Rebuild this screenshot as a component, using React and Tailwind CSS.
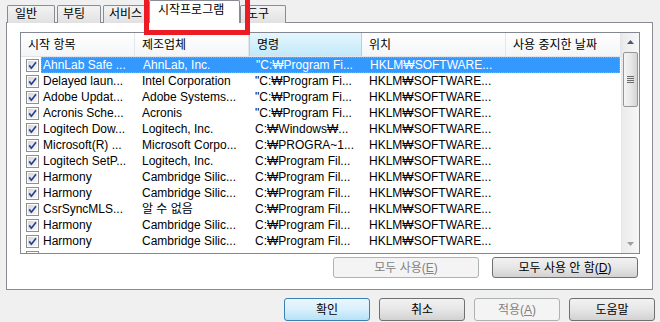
import React from 'react';

const FONT = { fontFamily: '"Liberation Sans", "Noto Sans CJK KR", sans-serif' };

const rows = [
  ['AhnLab Safe ...', 'AhnLab, Inc.', '"C:₩Program Fi...'],
  ['Delayed laun...', 'Intel Corporation', '"C:₩Program Fi...'],
  ['Adobe Updat...', 'Adobe Systems...', '"C:₩Program Fi...'],
  ['Acronis Sche...', 'Acronis', '"C:₩Program Fi...'],
  ['Logitech Dow...', 'Logitech, Inc.', 'C:₩Windows₩...'],
  ['Microsoft(R) ...', 'Microsoft Corpo...', 'C:₩PROGRA~1...'],
  ['Logitech SetP...', 'Logitech, Inc.', 'C:₩Program Fil...'],
  ['Harmony', 'Cambridge Silic...', 'C:₩Program Fil...'],
  ['Harmony', 'Cambridge Silic...', 'C:₩Program Fil...'],
  ['CsrSyncMLS...', '알 수 없음', 'C:₩Program Fil...'],
  ['Harmony', 'Cambridge Silic...', 'C:₩Program Fil...'],
  ['Harmony', 'Cambridge Silic...', 'C:₩Program Fil...'],
];

function Check() {
  return (
    <svg width="13" height="13" viewBox="0 0 13 13" className="shrink-0">
      <defs>
        <linearGradient id="cb" x1="0" y1="0" x2="1" y2="1">
          <stop offset="0" stopColor="#d6d6d6" />
          <stop offset="1" stopColor="#f7f7f7" />
        </linearGradient>
      </defs>
      <rect x="0.5" y="0.5" width="12" height="12" fill="#fff" stroke="#8e8f8f" />
      <rect x="2" y="2" width="9" height="9" fill="url(#cb)" />
      <path d="M3.2 6.4 L5.4 9.2 L10 3.2" fill="none" stroke="#27419b" strokeWidth="1.7" />
    </svg>
  );
}

function Tab({ label, className }) {
  return (
    <div
      className={`h-[18px] border border-b-0 border-[#898c95] rounded-t-[2px] bg-linear-to-b from-[#f3f3f3] to-[#e1e1e1] text-[12px] leading-[17px] whitespace-nowrap overflow-hidden ${className}`}
    >
      {label}
    </div>
  );
}

function HeaderCell({ label, w, hot }) {
  return (
    <div
      className={`h-full flex items-center pl-[7px] border-r text-[12px] whitespace-nowrap ${w} ${
        hot
          ? 'bg-linear-to-b from-[#e6f7fe] to-[#c2e8fa] border-[#96d9f9] border-l'
          : 'border-[#e3e6ea]'
      }`}
    >
      {label}
    </div>
  );
}

function Btn({ children, className, disabled, primary }) {
  let look = 'border-[#707070] bg-linear-to-b from-[#f2f2f2] via-[#e6e6e6] to-[#d2d2d2] text-black';
  if (disabled) look = 'border-[#adb2b5] bg-[#f4f4f4] text-[#838383]';
  if (primary) look = 'border-[#3c7fb1] bg-linear-to-b from-[#eaf6fd] via-[#d9f0fc] to-[#b6e1f7] text-black';
  return (
    <div
      className={`flex items-center justify-center border rounded-[3px] text-[12px] ${look} ${className}`}
    >
      {children}
    </div>
  );
}

export default function App() {
  return (
    <div className="w-[660px] h-[322px] bg-[#f0f0f0] overflow-hidden relative" style={FONT}>
      {/* tabs */}
      <div className="flex items-end h-[23px] pl-[7px] -mb-px">
        <Tab label="일반" className="w-[48px] pl-[7px]" />
        <Tab label="부팅" className="w-[44px] ml-[2px] pl-[5px]" />
        <Tab label="서비스" className="w-[48px] ml-[2px] pl-[5px]" />
        <div className="relative z-10 -ml-[2px] w-[91px] h-[23px] bg-white border border-b-0 border-[#898c95] rounded-t-[2px] text-[12px] leading-[19px] pl-[8px]">
          시작프로그램
        </div>
        <Tab label="도구" className="w-[46px] pl-[6px]" />
      </div>

      {/* panel */}
      <div className="ml-[6px] w-[647px] h-[268px] bg-white border border-[#898c95] pt-[9px] pl-[13px]">
        <div className="w-[620px] h-[222px] border border-[#828790] flex overflow-hidden">
          <div className="w-[600px] h-full overflow-hidden">
            <div className="h-[24px] flex bg-linear-to-b from-white to-[#f4f5f7] border-b border-[#e1e3e6]">
              <HeaderCell label="시작 항목" w="w-[114px]" />
              <HeaderCell label="제조업체" w="w-[114px]" />
              <HeaderCell label="명령" w="w-[113px]" hot />
              <HeaderCell label="위치" w="w-[144px]" />
              <HeaderCell label="사용 중지한 날짜" w="w-[115px]" />
            </div>
            {rows.map((r, i) => {
              const sel = i === 0;
              return (
                <div key={i} className="h-[16px] flex items-center">
                  <div className="w-[20px] pl-[5px] flex items-center">
                    <Check />
                  </div>
                  <div
                    className={`w-[579px] h-[16px] flex items-center text-[12px] whitespace-nowrap ${
                      sel ? 'bg-[#3399ff] text-white border border-dotted border-[#e89a3c]' : 'text-black'
                    }`}
                  >
                    <div className={`w-[94px] ${sel ? 'pl-[1px]' : 'pl-[2px]'}`}>{r[0]}</div>
                    <div className="w-[114px] pl-[7px]">{r[1]}</div>
                    <div className="w-[113px] pl-[6px]">{r[2]}</div>
                    <div className="w-[144px] pl-[7px]">HKLM₩SOFTWARE...</div>
                  </div>
                </div>
              );
            })}
            {/* partially visible next row */}
            <div className="h-[16px] flex pt-[2px] pl-[5px]">
              <Check />
            </div>
          </div>
          {/* scrollbar */}
          <div className="w-[18px] h-full bg-linear-to-r from-[#ebebeb] to-[#f7f7f7] border-l border-[#e6e6e6] flex flex-col items-center">
            <div className="h-[18px] w-full flex items-center justify-center">
              <svg width="7" height="4" viewBox="0 0 7 4">
                <path d="M0 4 L3.5 0 L7 4 Z" fill="#4d5a6e" />
              </svg>
            </div>
            <div className="mt-[1px] w-[15px] h-[55px] rounded-[2px] border border-[#969696] bg-linear-to-r from-[#f4f4f4] via-[#e8e8e8] to-[#d4d4d4] flex flex-col items-center justify-center gap-[1px]">
              <div className="w-[7px] h-px bg-[#6c6c6c]" />
              <div className="w-[7px] h-px bg-[#6c6c6c]" />
              <div className="w-[7px] h-px bg-[#6c6c6c]" />
              <div className="w-[7px] h-px bg-[#6c6c6c]" />
            </div>
            <div className="flex-1" />
            <div className="h-[18px] w-full flex items-center justify-center">
              <svg width="7" height="4" viewBox="0 0 7 4">
                <path d="M0 0 L3.5 4 L7 0 Z" fill="#9aa0a8" />
              </svg>
            </div>
          </div>
        </div>

        <div className="w-[620px] flex justify-end gap-[13px] pr-[2px] mt-[3px]">
          <Btn disabled className="w-[146px] h-[21px]">
            <span>
              모두 사용(<span className="underline">E</span>)
            </span>
          </Btn>
          <Btn className="w-[146px] h-[21px]">
            <span>
              모두 사용 안 함(<span className="underline">D</span>)
            </span>
          </Btn>
        </div>
      </div>

      {/* dialog buttons */}
      <div className="flex justify-end gap-[9px] pr-[5px] mt-[8px]">
        <Btn primary className="w-[86px] h-[23px]">확인</Btn>
        <Btn className="w-[86px] h-[23px]">취소</Btn>
        <Btn disabled className="w-[86px] h-[23px]">
          <span>
            적용(<span className="underline">A</span>)
          </span>
        </Btn>
        <Btn className="w-[86px] h-[23px]">도움말</Btn>
      </div>

      {/* red annotation box */}
      <div className="absolute left-[144px] top-[-5px] w-[106px] h-[40px] border-[5px] border-[#ed1c24] z-20" />
    </div>
  );
}
